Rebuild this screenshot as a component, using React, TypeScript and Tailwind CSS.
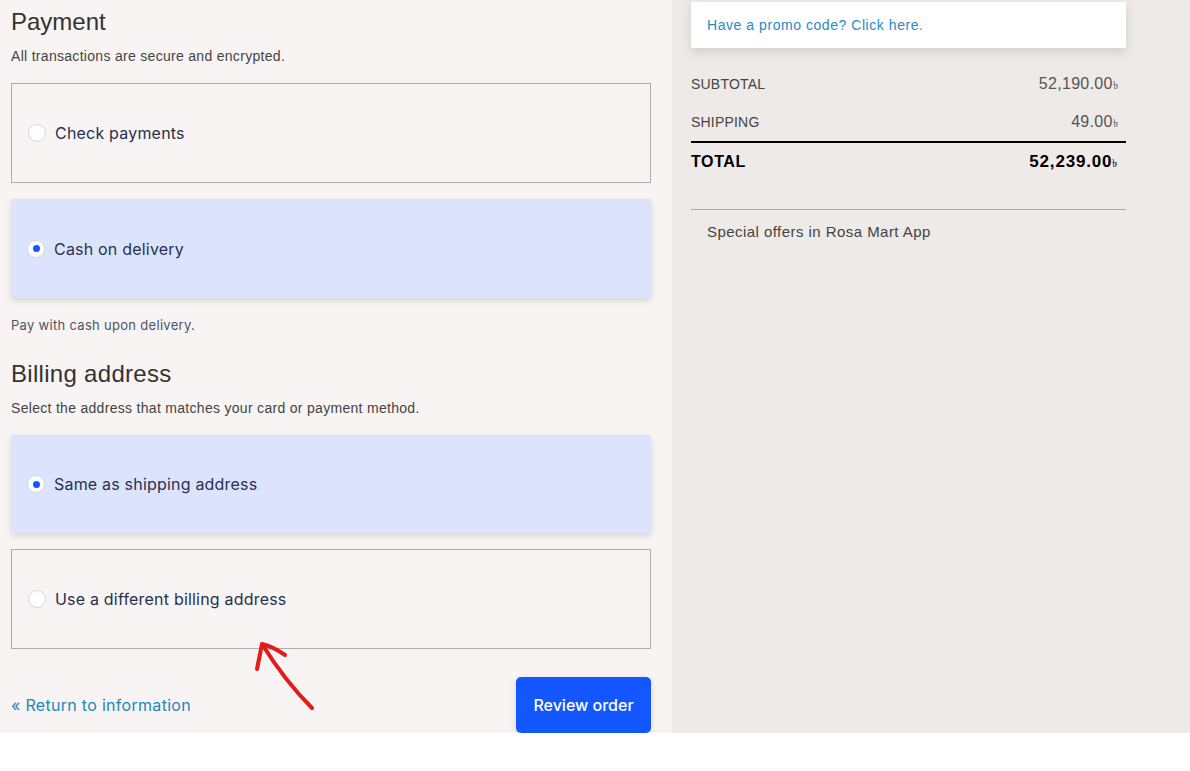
import React from "react";

const font = { fontFamily: "Inter, 'Noto Sans', sans-serif" };
const arial = { fontFamily: "'Liberation Sans', Arial, sans-serif" };

function Radio({ checked }: { checked?: boolean }) {
  return (
    <span className="flex h-[18px] w-[18px] shrink-0 items-center justify-center rounded-full border border-[#d4d7df] bg-white">
      {checked && <span className="h-[7px] w-[7px] rounded-full bg-[#1257ff]" />}
    </span>
  );
}

function Option({
  label,
  checked,
  className = "",
}: {
  label: string;
  checked?: boolean;
  className?: string;
}) {
  return (
    <label
      className={[
        "flex shrink-0 cursor-pointer items-center gap-[9px] pl-[16px]",
        checked
          ? "bg-[#dce4fd] shadow-[0_3px_6px_rgba(0,0,0,0.12)]"
          : "border border-[#adadad]",
        className,
      ].join(" ")}
    >
      <Radio checked={checked} />
      <span className="text-[16px] tracking-[0.2px] text-[#28304f]">{label}</span>
    </label>
  );
}

function Row({ label, value }: { label: string; value: string }) {
  return (
    <div className="flex h-[38px] items-center justify-between" style={arial}>
      <span className="text-[14px] tracking-[0.2px] text-[#444]">{label}</span>
      <span className="pr-[8px] text-[16px] tracking-[0.3px] text-[#555]">
        {value}
        <span className="text-[11px]">৳</span>
      </span>
    </div>
  );
}

export default function App() {
  return (
    <div className="relative bg-white" style={font}>
      <div className="flex h-[733px] overflow-hidden">
        {/* left: payment + billing */}
        <main className="flex w-[672px] flex-col bg-[#f7f4f3] pl-[11px] pr-[21px]">
          <h2
            className="mt-[8px] shrink-0 text-[24px] leading-[28px] text-[#333]"
            style={arial}
          >
            Payment
          </h2>
          <p
            className="mt-[11px] shrink-0 text-[14px] leading-[18px] tracking-[0.3px] text-[#444]"
            style={arial}
          >
            All transactions are secure and encrypted.
          </p>
          <Option label="Check payments" className="mt-[18px] h-[100px]" />
          <Option label="Cash on delivery" checked className="mt-[16px] h-[99px]" />
          <p className="mt-[18px] shrink-0 text-[13px] leading-[18px] tracking-[0.3px] text-[#4d5468]">
            Pay with cash upon delivery.
          </p>
          <h2
            className="mt-[26px] shrink-0 text-[24px] leading-[28px] tracking-[0.3px] text-[#333]"
            style={arial}
          >
            Billing address
          </h2>
          <p
            className="mt-[11px] shrink-0 text-[14px] leading-[18px] tracking-[0.3px] text-[#444]"
            style={arial}
          >
            Select the address that matches your card or payment method.
          </p>
          <Option label="Same as shipping address" checked className="mt-[18px] h-[98px]" />
          <Option
            label="Use a different billing address"
            className="mt-[16px] h-[100px]"
          />
          <div className="mt-[28px] flex shrink-0 items-start justify-between">
            <a
              href="#"
              className="mt-[18px] text-[16px] leading-[20px] tracking-[0.3px] text-[#1f86bd]"
            >
              « Return to information
            </a>
            <button className="h-[56px] w-[135px] rounded-[5px] bg-[#1257ff] text-[16px] font-medium text-white shadow-[0_2px_6px_rgba(0,0,0,0.12)]">
              Review order
            </button>
          </div>
        </main>

        {/* right: order summary */}
        <aside className="flex flex-1 flex-col bg-[#edeae7] pl-[19px]" style={arial}>
          <div className="w-[435px]">
            <div className="h-[47px] bg-white shadow-[0_4px_10px_rgba(0,0,0,0.12)]">
              <div className="mt-px h-px bg-[#e8e8e8]" />
              <a
                href="#"
                className="ml-[16px] mt-[14px] block text-[14px] leading-[18px] tracking-[0.55px] text-[#2b8ac6]"
              >
                Have a promo code? Click here.
              </a>
            </div>
            <div className="mt-[17px]">
              <Row label="SUBTOTAL" value="52,190.00" />
              <Row label="SHIPPING" value="49.00" />
            </div>
            <div className="h-[2px] bg-black" />
            <div className="flex h-[38px] items-center justify-between">
              <span className="text-[16px] font-bold tracking-[0.6px] text-black">TOTAL</span>
              <span className="pr-[8px] text-[17px] font-bold tracking-[0.8px] text-black">
                52,239.00<span className="text-[11px] font-normal">৳</span>
              </span>
            </div>
            <div className="mt-[28px] h-px bg-[#aaa]" />
            <p className="ml-[16px] mt-[12px] text-[15px] leading-[20px] tracking-[0.45px] text-[#444]">
              Special offers in Rosa Mart App
            </p>
          </div>
        </aside>
      </div>

      {/* red annotation arrow */}
      <svg
        className="pointer-events-none absolute left-0 top-0"
        width="1190"
        height="771"
        viewBox="0 0 1190 771"
      >
        <path
          d="M262 644 C275 665 292 688 312 708 M262 644 L257 669 M262 644 C270 646 278 650 285 655"
          fill="none"
          stroke="#e31b1b"
          strokeWidth="4"
          strokeLinecap="round"
          strokeLinejoin="round"
        />
      </svg>
    </div>
  );
}
